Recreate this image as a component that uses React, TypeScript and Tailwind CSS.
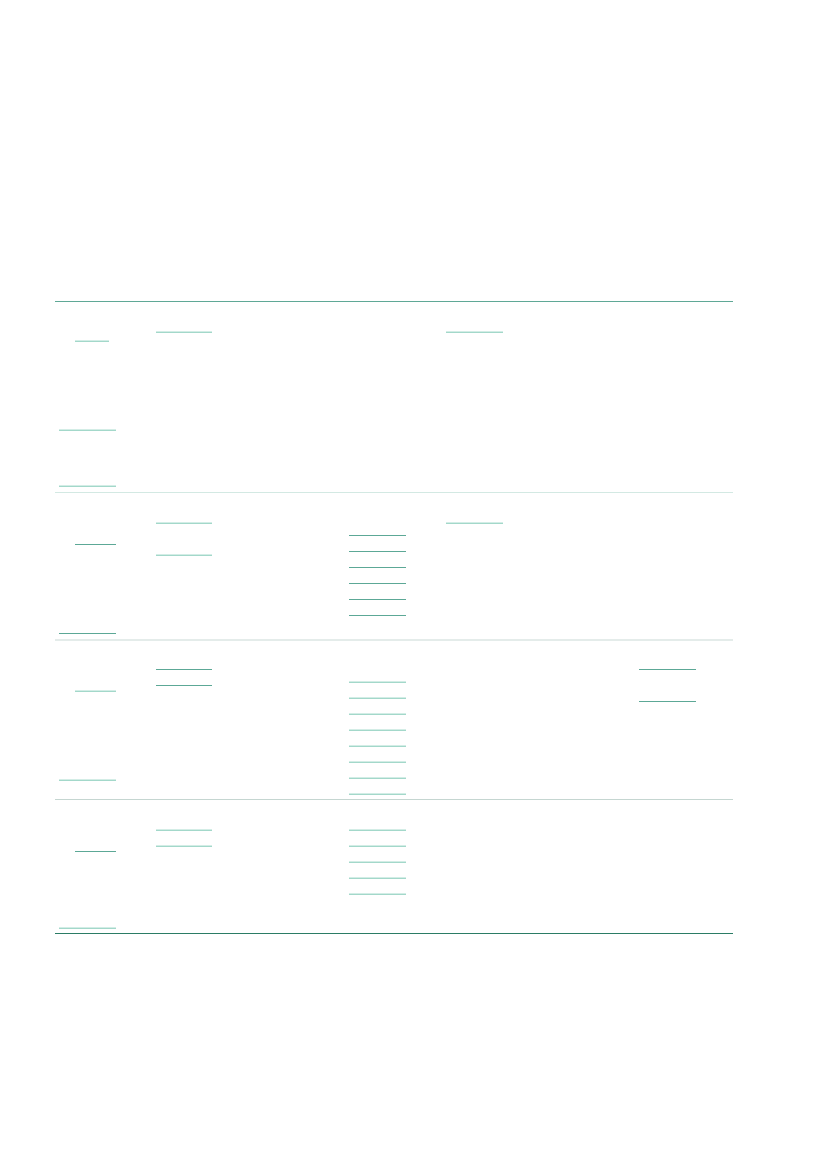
import React from "react";

// underline-only links: the link text is white on white in the original
const Light = ({ className = "" }: { className?: string }) => (
  <a className={`block h-[2px] border-t border-[#d3ede6] bg-[#a3d8ca] ${className}`} />
);

const Dark = ({ className = "" }: { className?: string }) => (
  <a className={`block h-px bg-[#5ca896] ${className}`} />
);

const Cell = ({ children }: { children?: React.ReactNode }) => (
  <div className="flex flex-col pl-[4px]">{children}</div>
);

export default function App() {
  return (
    <div className="min-h-[1169px] bg-white font-['Liberation_Sans',sans-serif] text-white">
      <div className="ml-[55px] w-[678px] pt-[301px]">
        <div className="h-px bg-[#5fa896]" />

        {/* row 1 */}
        <div className="grid h-[191px] grid-cols-7 border-b border-[#d3e9e3]">
          <Cell>
            <Light className="ml-[16px] mt-[38px] w-[34px]" />
            <Light className="mt-[87px] w-[57px]" />
            <Light className="mt-[54px] w-[57px]" />
          </Cell>
          <Cell>
            <Light className="mt-[29px] w-[56px]" />
          </Cell>
          <Cell />
          <Cell />
          <Cell>
            <Light className="mt-[29px] w-[57px]" />
          </Cell>
          <Cell />
          <Cell />
        </div>

        {/* row 2 */}
        <div className="grid h-[148px] grid-cols-7 border-b-2 border-[#e4ecea]">
          <Cell>
            <Dark className="ml-[16px] mt-[51px] w-[41px]" />
            <Dark className="mt-[88px] w-[57px]" />
          </Cell>
          <Cell>
            <Light className="mt-[29px] w-[56px]" />
            <Light className="mt-[30px] w-[56px]" />
          </Cell>
          <Cell />
          <div className="flex flex-col pl-[3px]">
            <Dark className="mt-[42px] w-[57px]" />
            <Dark className="mt-[15px] w-[57px]" />
            <Dark className="mt-[15px] w-[57px]" />
            <Dark className="mt-[15px] w-[57px]" />
            <Dark className="mt-[15px] w-[57px]" />
            <Dark className="mt-[15px] w-[57px]" />
          </div>
          <Cell>
            <Light className="mt-[29px] w-[57px]" />
          </Cell>
          <Cell />
          <Cell />
        </div>

        {/* row 3 */}
        <div className="grid h-[159px] grid-cols-7 border-b border-[#c5d6d1]">
          <Cell>
            <Light className="ml-[16px] mt-[49px] w-[41px]" />
            <Light className="mt-[87px] w-[57px]" />
          </Cell>
          <Cell>
            <Dark className="mt-[28px] w-[56px]" />
            <Dark className="mt-[15px] w-[56px]" />
          </Cell>
          <Cell />
          <div className="flex flex-col pl-[3px]">
            <Light className="mt-[40px] w-[57px]" />
            <Light className="mt-[14px] w-[57px]" />
            <Light className="mt-[14px] w-[57px]" />
            <Light className="mt-[14px] w-[57px]" />
            <Light className="mt-[14px] w-[57px]" />
            <Light className="mt-[14px] w-[57px]" />
            <Light className="mt-[14px] w-[57px]" />
            <Light className="mt-[14px] w-[57px]" />
          </div>
          <Cell />
          <Cell />
          <div className="flex flex-col pl-[3px]">
            <Dark className="mt-[28px] w-[57px]" />
            <Dark className="mt-[31px] w-[57px]" />
          </div>
        </div>

        {/* row 4 */}
        <div className="grid h-[134px] grid-cols-7 border-b border-[#2b7c65]">
          <Cell>
            <Dark className="ml-[16px] mt-[51px] w-[41px]" />
            <Light className="mt-[75px] w-[57px]" />
          </Cell>
          <Cell>
            <Light className="mt-[29px] w-[56px]" />
            <Light className="mt-[14px] w-[56px]" />
          </Cell>
          <Cell />
          <div className="flex flex-col pl-[3px]">
            <Light className="mt-[29px] w-[57px]" />
            <Light className="mt-[14px] w-[57px]" />
            <Light className="mt-[14px] w-[57px]" />
            <Light className="mt-[14px] w-[57px]" />
            <Light className="mt-[14px] w-[57px]" />
          </div>
          <Cell />
          <Cell />
          <Cell />
        </div>
      </div>
    </div>
  );
}
